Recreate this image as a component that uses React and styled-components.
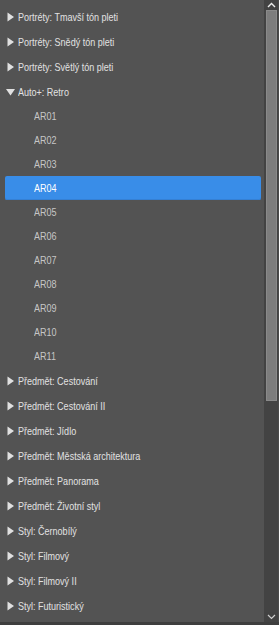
import React from "react";
import styled, { createGlobalStyle } from "styled-components";

const GlobalStyle = createGlobalStyle`
  html, body {
    margin: 0;
    padding: 0;
    background: #535353;
  }
`;

const groups = [
  { title: "Portréty: Tmavší tón pleti" },
  { title: "Portréty: Snědý tón pleti" },
  { title: "Portréty: Světlý tón pleti" },
  {
    title: "Auto+: Retro",
    open: true,
    items: ["AR01", "AR02", "AR03", "AR04", "AR05", "AR06", "AR07", "AR08", "AR09", "AR10", "AR11"],
  },
  { title: "Předmět: Cestování" },
  { title: "Předmět: Cestování II" },
  { title: "Předmět: Jídlo" },
  { title: "Předmět: Městská architektura" },
  { title: "Předmět: Panorama" },
  { title: "Předmět: Životní styl" },
  { title: "Styl: Černobílý" },
  { title: "Styl: Filmový" },
  { title: "Styl: Filmový II" },
  { title: "Styl: Futuristický" },
];

const selected = "AR04";

const App = () => {
  return (
    <>
      <GlobalStyle />
      <Panel>
        <List>
          {groups.map((g) => (
            <React.Fragment key={g.title}>
              <Header>
                <Arrow open={g.open}>
                  <svg width="9" height="10" viewBox="0 0 9 10">
                    <path d="M1.5 0.5 L8 5 L1.5 9.5 Z" fill="#e0e0e0" />
                  </svg>
                </Arrow>
                <Label>{g.title}</Label>
              </Header>
              {g.open &&
                g.items.map((it) => (
                  <Item key={it} active={it === selected}>
                    <Label>{it}</Label>
                  </Item>
                ))}
            </React.Fragment>
          ))}
        </List>
        <ScrollBar>
          <ScrollButton>
            <svg width="9" height="6" viewBox="0 0 9 6">
              <path d="M1 5 L4.5 1.5 L8 5" stroke="#ececec" strokeWidth="1.4" fill="none" />
            </svg>
          </ScrollButton>
          <Track>
            <Thumb />
          </Track>
          <ScrollButton>
            <svg width="9" height="6" viewBox="0 0 9 6">
              <path d="M1 1 L4.5 4.5 L8 1" stroke="#cfcfcf" strokeWidth="1.2" fill="none" />
            </svg>
          </ScrollButton>
        </ScrollBar>
      </Panel>
    </>
  );
};

const Panel = styled.div`
  width: 279px;
  height: 625px;
  display: flex;
  background: #535353;
  border-bottom: 3px solid #3e3e3e;
  box-sizing: border-box;
  overflow: hidden;
  font-family: "Liberation Sans", Arial, sans-serif;
  font-size: 11px;
`;

const List = styled.div`
  flex: 1;
  padding: 4px 3px 0 5px;
  overflow: hidden;
`;

const Header = styled.div`
  height: 25px;
  display: flex;
  align-items: center;
  color: #e2e2e2;
  padding-left: 1px;
  padding-top: 1px;
  box-sizing: border-box;
  white-space: nowrap;
`;

const Arrow = styled.span`
  width: 9px;
  height: 10px;
  margin-right: 3px;
  display: flex;
  transform: ${(p) => (p.open ? "rotate(90deg)" : "none")};
`;

const Label = styled.span`
  display: inline-block;
  transform: scaleX(0.82);
  transform-origin: left center;
  white-space: nowrap;
`;

const Item = styled.div`
  height: 24px;
  display: flex;
  align-items: center;
  padding-left: 29px;
  border-radius: 2px;
  color: ${(p) => (p.active ? "#ffffff" : "#c6c6c6")};
  background: ${(p) => (p.active ? "#398de8" : "transparent")};
  box-shadow: ${(p) => (p.active ? "inset 0 -1px 0 #3580d4" : "none")};
`;

const ScrollBar = styled.div`
  width: 15px;
  display: flex;
  flex-direction: column;
  background: #464646;
  border-right: 1px solid #4a4a4a;
  box-sizing: border-box;
`;

const ScrollButton = styled.div`
  height: 10px;
  display: flex;
  align-items: center;
  justify-content: center;
  background: #424242;
`;

const Track = styled.div`
  flex: 1;
  padding: 0 0 0 2px;
  background: #434343;
`;

const Thumb = styled.div`
  width: 11px;
  height: 391px;
  background: #7d7d7d;
  border: 1px solid #8a8a8a;
  box-sizing: border-box;
`;

export default App;
